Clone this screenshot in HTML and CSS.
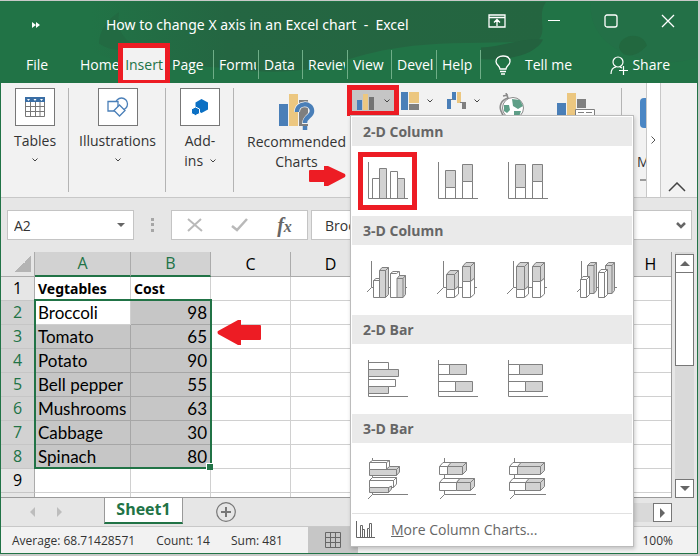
FILE: index.html
```
<!DOCTYPE html>
<html lang="en">
<head>
  <meta charset="UTF-8">
  <meta name="viewport" content="width=device-width, initial-scale=1.0">
  <title>How to change X axis in an Excel chart - Excel</title>
  <link rel="stylesheet" href="styles.css">
</head>
<body>
  <div class="window">
    <header class="top">
      <svg class="top-art" viewBox="0 0 696 82" preserveAspectRatio="none">
        <defs>
          <linearGradient id="shade">
            <stop offset="0" stop-color="#246642" stop-opacity="0"/>
            <stop offset=".3" stop-color="#246642"/>
            <stop offset="1" stop-color="#246540"/>
          </linearGradient>
        </defs>
        <path d="M90 0H545C535 14 548 30 536 40C490 42 440 40 400 46C340 54 330 74 250 70C190 60 130 70 90 50Z" fill="url(#shade)"/>
        <path d="M98 42C98 30 106 18 118 10C116 26 120 36 134 44C122 50 110 50 98 42Z" fill="#226a42"/>
        <path d="M480 46C500 46 520 36 542 38C536 52 510 60 480 58Z" fill="#23623f"/>
        <path d="M590 0H696V56C670 66 640 60 616 48C596 36 588 18 590 0Z" fill="#237047"/>
        <path d="M618 46C618 34 640 28 646 44C636 56 622 58 618 46Z" fill="#22683f"/>
      </svg>
      <div class="titlebar">
        <button class="qat" aria-label="Customize toolbar">
          <svg width="8" height="6" viewBox="0 0 8 6"><path d="M0 0L4 3L0 6ZM4 0L8 3L4 6Z" fill="#fff"/></svg>
        </button>
        <h1>How to change X axis in an Excel chart&nbsp; -&nbsp; Excel</h1>
        <div class="win-buttons">
          <button aria-label="Ribbon display options">
            <svg width="18" height="14" viewBox="0 0 18 14" fill="none" stroke="#fff"><path d="M1 1H17V13H1ZM1 3.500H17M9 12V6M6 8.500L9 5.500L12 8.500" stroke-width="1.300"/></svg>
          </button>
          <button aria-label="Minimize">
            <svg width="14" height="14" viewBox="0 0 14 14"><path d="M1 6.500H13" stroke="#fff"/></svg>
          </button>
          <button aria-label="Maximize">
            <svg width="14" height="14" viewBox="0 0 14 14" fill="none" stroke="#fff"><rect x="1" y="1" width="12" height="12" rx="2" stroke-width="1.300"/></svg>
          </button>
          <button aria-label="Close">
            <svg width="14" height="14" viewBox="0 0 14 14"><path d="M1 1L13 13M13 1L1 13" stroke="#fff" stroke-width="1.300"/></svg>
          </button>
        </div>
      </div>
      <nav class="tabs">
        <a href="#" class="file">File</a>
        <a href="#" class="home">Home</a>
        <a href="#" class="active">Insert</a>
        <a href="#" class="tab page"><span>Page</span></a>
        <a href="#" class="tab"><span>Formu</span></a>
        <a href="#" class="tab"><span>Data</span></a>
        <a href="#" class="tab"><span>Review</span></a>
        <a href="#" class="tab"><span>View</span></a>
        <a href="#" class="tab"><span>Devel</span></a>
        <a href="#" class="tab"><span>Help</span></a>
        <a href="#" class="tell">
          <svg width="16" height="20" viewBox="0 0 16 20" fill="none" stroke="#fff" stroke-width="1.300"><path d="M5 14C5 11 1 10 1 6.500C1 3 4 1 8 1S15 3 15 6.500C15 10 11 11 11 14ZM5 16.500H11M6 19H10"/></svg>
          Tell me
        </a>
        <a href="#" class="share">
          <svg width="18" height="19" viewBox="0 0 18 19" fill="none" stroke="#fff" stroke-width="1.200"><circle cx="8" cy="6" r="5"/><path d="M1 18C1 14 3 11.500 6 11M10 11L12 12M9 14.500H18M13.500 10V19"/></svg>
          Share
        </a>
      </nav>
    </header>

    <section class="ribbon">
      <button class="group tables">
        <span class="icon-box">
          <svg width="20" height="20" viewBox="0 0 20 20"><path d="M.5 .5H19.500V19.500H.5ZM.5 9.500H19.500M.5 14.500H19.500M5.500 4V19.500M10.500 4V19.500M15 4V19.500" fill="none" stroke="#777"/><path d="M0 0H20V5H0Z" fill="#3a6ea5"/><path d="M2 2H5L3.500 4ZM8.500 2H11.500L10 4ZM15 2H18L16.500 4Z" fill="#fff"/></svg>
        </span>
        <span>Tables</span>
        <svg class="chev" width="6" height="4" viewBox="0 0 6 4"><path d="M.5 .5L3 3L5.500 .5"/></svg>
      </button>
      <button class="group illustrations">
        <span class="icon-box">
          <svg width="22" height="20" viewBox="0 0 22 20" fill="#fff" stroke="#4a7fb8" stroke-width="1.300"><circle cx="14.500" cy="7" r="6"/><path d="M1 4.500H11V14H1Z"/><path d="M12.500 8L18 13.500L12.500 19L7 13.500Z"/></svg>
        </span>
        <span>Illustrations</span>
        <svg class="chev" width="6" height="4" viewBox="0 0 6 4"><path d="M.5 .5L3 3L5.500 .5"/></svg>
      </button>
      <button class="group addins">
        <span class="icon-box">
          <svg width="18" height="18" viewBox="0 0 18 18" fill="#0b70c4"><path d="M10.500 1L17 4.500V11.500L10.500 15L4.500 11.500V4.500Z"/><path d="M4.500 9L8.500 11V15.500L4.500 17.500L.5 15.500V11Z" stroke="#fff"/></svg>
        </span>
        <span>Add-</span>
        <span>ins <svg class="chev" width="6" height="4" viewBox="0 0 6 4"><path d="M.5 .5L3 3L5.500 .5"/></svg></span>
      </button>
      <div class="charts">
        <button class="recommended">
          <svg width="36" height="36" viewBox="0 0 36 36"><path d="M0 10H9V32H0Z" fill="#4a7fb8"/><path d="M10 0H19V32H10Z" fill="#ecc780"/><path d="M20 6H29V32H20Z" fill="#7f7f7f"/><path d="M18 18C18 8 33 8 33 17C33 23 26 22 26 30" fill="none" stroke="#f2f2f2" stroke-width="6"/><path d="M18 18C18 8 33 8 33 17C33 23 26 22 26 29M26 32V36" fill="none" stroke="#4a7fb8" stroke-width="4.500"/></svg>
          <span>Recommended</span>
          <span>Charts</span>
        </button>
        <div class="column-chart">
          <button class="column-button" aria-label="Insert column chart">
            <svg width="18" height="18" viewBox="0 0 18 18"><path d="M0 8H5V18H0Z" fill="#4a7fb8"/><path d="M6 2H11V18H6Z" fill="#ecc780"/><path d="M12 5H17V18H12Z" fill="#737373"/></svg>
            <svg class="chev" width="6" height="4" viewBox="0 0 6 4"><path d="M.5 .5L3 3L5.500 .5"/></svg>
          </button>
          <div class="menu">
            <h2>2-D Column</h2>
            <div class="options">
              <button class="picked" aria-label="Clustered column"><svg class="chart" viewBox="0 0 40 40"><path d="M4.500 17.500H11.500V37.500H4.500ZM22.500 10.500H29.500V37.500H22.500Z" fill="#fff"/><path d="M11.500 7.500H18.500V37.500H11.500ZM29.500 17.500H36.500V37.500H29.500Z" fill="#d2d2d2"/><path d="M.5 1V37.500H40"/></svg></button>
              <button aria-label="Stacked column"><svg class="chart" viewBox="0 0 40 40"><path d="M7.500 26.500H17.500V37.500H7.500ZM24.500 20.500H34.500V37.500H24.500Z" fill="#fff"/><path d="M7.500 9.500H17.500V26.500H7.500ZM24.500 3.500H34.500V20.500H24.500Z" fill="#d2d2d2"/><path d="M.5 1V37.500H40"/></svg></button>
              <button aria-label="100% stacked column"><svg class="chart" viewBox="0 0 40 40"><path d="M7.500 26.500H17.500V37.500H7.500ZM24.500 20.500H34.500V37.500H24.500Z" fill="#fff"/><path d="M7.500 3.500H17.500V26.500H7.500ZM24.500 3.500H34.500V20.500H24.500Z" fill="#d2d2d2"/><path d="M.5 1V37.500H40"/></svg></button>
            </div>
            <h2>3-D Column</h2>
            <div class="options">
              <button aria-label="3-D clustered column"><svg class="chart" viewBox="0 0 40 40"><path d="M4.500 1V27.500L0 32M4.500 27.500H40" fill="none"/><path d="M6.500 20.500L9 18.500H15V37.500H6.500ZM6.500 20.500H12.500M23.500 13.500L26 11.500H32.500V37.500H23.500ZM23.500 13.500H29.500L32 11.500" fill="#fff"/><path d="M12.500 10.500L15 7.500H21.500V34.500L18.500 37.500H12.500ZM12.500 10.500H18.500V37.500M18.500 10.500L21.500 7.500M30 18.500L32.500 15.500H38.500V34.500L36 37.500H30ZM30 18.500H36V37.500M36 18.500L38.500 15.500" fill="#d2d2d2"/></svg></button>
              <button aria-label="3-D stacked column"><svg class="chart" viewBox="0 0 40 40"><path d="M6.500 1V27.500L0 34M6.500 27.500H40" fill="none"/><path d="M9.500 29.500H17.500L21.500 26V34L17.500 37.500H9.500ZM17.500 29.500V37.500M25.500 21.500H33.500L37.500 18V34L33.500 37.500H25.500ZM33.500 21.500V37.500" fill="#fff"/><path d="M9.500 14.500L13 10.500H21.500V26L17.500 29.500H9.500ZM9.500 14.500H17.500V29.500M17.500 14.500L21.500 10.500M25.500 6.500L29 2.500H37.500V18L33.500 21.500H25.500ZM25.500 6.500H33.500V21.500M33.500 6.500L37.500 2.500" fill="#d2d2d2"/></svg></button>
              <button aria-label="3-D 100% stacked column"><svg class="chart" viewBox="0 0 40 40"><path d="M6.500 1V27.500L0 34M6.500 27.500H40" fill="none"/><path d="M9.500 29.500H17.500L21.500 26V34L17.500 37.500H9.500ZM17.500 29.500V37.500M25.500 21.500H33.500L37.500 18V34L33.500 37.500H25.500ZM33.500 21.500V37.500" fill="#fff"/><path d="M9.500 6.500L13 2.500H21.500V26L17.500 29.500H9.500ZM9.500 6.500H17.500V29.500M17.500 6.500L21.500 2.500M25.500 6.500L29 2.500H37.500V18L33.500 21.500H25.500ZM25.500 6.500H33.500V21.500M33.500 6.500L37.500 2.500" fill="#d2d2d2"/></svg></button>
              <button aria-label="3-D column"><svg class="chart" viewBox="0 0 40 40"><path d="M4.500 1V27.500L0 32M4.500 27.500H40" fill="none"/><path d="M10.500 5.500L13.500 2.500H19.500V30.500L17 33.500H10.500ZM10.500 5.500H17V33.500M17 5.500L19.500 2.500M28.500 5.500L31.500 2.500H37.500V30.500L35 33.500H28.500ZM28.500 5.500H35V33.500M35 5.500L37.500 2.500" fill="#d2d2d2"/><path d="M3.500 19.500L6 16.500H12.500V34.500L9.500 37.500H3.500ZM3.500 19.500H9.500V37.500M9.500 19.500L12.500 16.500M21.500 12.500L24 9.500H30.500V34.500L27.500 37.500H21.500ZM21.500 12.500H27.500V37.500M27.500 12.500L30.500 9.500" fill="#fff"/></svg></button>
            </div>
            <h2>2-D Bar</h2>
            <div class="options">
              <button aria-label="Clustered bar"><svg class="chart" viewBox="0 0 40 40"><path d="M.5 3.500H20.500V10.500H.5ZM.5 20.500H27.500V27.500H.5Z" fill="#fff"/><path d="M.5 10.500H30.500V17.500H.5ZM.5 27.500H20.500V34.500H.5Z" fill="#d2d2d2"/><path d="M.5 1V37.500H40" fill="none"/></svg></button>
              <button aria-label="Stacked bar"><svg class="chart" viewBox="0 0 40 40"><path d="M.5 5.500H11.500V15.500H.5ZM.5 22.500H17.500V32.500H.5Z" fill="#fff"/><path d="M11.500 5.500H28.500V15.500H11.500ZM17.500 22.500H34.500V32.500H17.500Z" fill="#d2d2d2"/><path d="M.5 1V37.500H40" fill="none"/></svg></button>
              <button aria-label="100% stacked bar"><svg class="chart" viewBox="0 0 40 40"><path d="M.5 5.500H11.500V15.500H.5ZM.5 22.500H17.500V32.500H.5Z" fill="#fff"/><path d="M11.500 5.500H34.500V15.500H11.500ZM17.500 22.500H34.500V32.500H17.500Z" fill="#d2d2d2"/><path d="M.5 1V37.500H40" fill="none"/></svg></button>
            </div>
            <h2>3-D Bar</h2>
            <div class="options">
              <button aria-label="3-D clustered bar"><svg class="chart" viewBox="0 0 40 40"><path d="M4.500 0V36.500L0 41M4.500 36.500H40" fill="none"/><path d="M1.500 4.500L4.500 2.500H21.500V8.500L18.500 11.500H1.500ZM1.500 4.500H18.500V11.500M18.500 4.500L21.500 2.500M1.500 22.500L4.500 19.500H28.500V26L25.500 29.500H1.500ZM1.500 22.500H25.500V29.500M25.500 22.500L28.500 19.500" fill="#fff"/><path d="M1.500 11.500H18L21.500 8.500H31.500V14L28.500 17.500H1.500ZM18 11.500H28.500V17.500M28.500 11.500L31.500 8.500M1.500 29.500H20.500V34.500H1.500ZM20.500 29.500L23.500 28V31L20.500 34.500Z" fill="#d2d2d2"/></svg></button>
              <button aria-label="3-D stacked bar"><svg class="chart" viewBox="0 0 40 40"><path d="M6.500 0V36.500L2 41M6.500 36.500H38" fill="none"/><path d="M1.500 8.500L5 4.500H14L10.500 8.500V16.500H1.500ZM1.500 8.500H10.500M1.500 24.500L5 20.500H22L18.500 24.500V32.500H1.500ZM1.500 24.500H18.500" fill="#fff"/><path d="M9.500 8.500L13 4.500H28.500V12.500L24.500 16.500H9.500ZM9.500 8.500H24.500V16.500M24.500 8.500L28.500 4.500M18.500 24.500L22 20.500H36.500V28.500L32.500 32.500H18.500ZM18.500 24.500H32.500V32.500M32.500 24.500L36.500 20.500" fill="#d2d2d2"/></svg></button>
              <button aria-label="3-D 100% stacked bar"><svg class="chart" viewBox="0 0 40 40"><path d="M6.500 0V36.500L2 41M6.500 36.500H38" fill="none"/><path d="M1.500 8.500L5 4.500H14L10.500 8.500V16.500H1.500ZM1.500 8.500H10.500M1.500 24.500L5 20.500H22L18.500 24.500V32.500H1.500ZM1.500 24.500H18.500" fill="#fff"/><path d="M9.500 8.500L13 4.500H36.500V12.500L32.500 16.500H9.500ZM9.500 8.500H32.500V16.500M32.500 8.500L36.500 4.500M17.500 24.500L21 20.500H36.500V28.500L32.500 32.500H17.500ZM17.500 24.500H32.500V32.500M32.500 24.500L36.500 20.500" fill="#d2d2d2"/></svg></button>
            </div>
            <button class="more">
              <svg width="19" height="18" viewBox="0 0 19 18" fill="none" stroke="#666"><path d="M.5 0V16.500H19M4.500 16V4.500H6.500V16M6.500 8.500H8.500V16M11.500 16V7.500H13.500V16M13.500 7V2.500H15.500V16"/></svg>
              <span><u>M</u>ore Column Charts...</span>
            </button>
          </div>
        </div>
        <button class="chart-button" aria-label="Hierarchy chart">
          <svg width="18" height="18" viewBox="0 0 18 18"><path d="M0 0H7V18H0Z" fill="#4a7fb8"/><path d="M8 0H18V11H8Z" fill="#ecc780"/><path d="M8 12H18V18H8Z" fill="#7f7f7f"/></svg>
          <svg class="chev" width="6" height="4" viewBox="0 0 6 4"><path d="M.5 .5L3 3L5.500 .5"/></svg>
        </button>
        <button class="chart-button" aria-label="Waterfall chart">
          <svg width="19" height="18" viewBox="0 0 19 18"><path d="M0 7H4V17H0ZM5 0H9V8H5Z" fill="#4a7fb8"/><path d="M10 0H14V11H10Z" fill="#ecc780"/><path d="M15 10H19V17H15Z" fill="#7f7f7f"/><path d="M4 7.500H6M13 10.500H16" stroke="#7f7f7f"/></svg>
          <svg class="chev" width="6" height="4" viewBox="0 0 6 4"><path d="M.5 .5L3 3L5.500 .5"/></svg>
        </button>
        <button class="big-button" aria-label="Maps">
          <svg width="26" height="32" viewBox="0 0 26 32"><circle cx="14" cy="15" r="10.500" fill="#fff" stroke="#8a8a8a"/><path d="M13 6L21 7L24 13L19 16L14 13ZM5 12L10 12L11 17L8 20L5 18ZM15 18L22 18L20 24L15 25Z" fill="#5f9f88"/><path d="M4 3L9 2M7 0L9 5C2 7 0 13 2 18C4 24 8 27 13 29" fill="none" stroke="#8a8a8a" stroke-width="1.600"/></svg>
        </button>
        <button class="big-button" aria-label="PivotChart">
          <svg width="38" height="32" viewBox="0 0 38 32"><path d="M0 10H9V32H0Z" fill="#4a7fb8"/><path d="M10 0H19V32H10Z" fill="#ecc780"/><path d="M20 6H29V15H20Z" fill="#7f7f7f"/><path d="M18.500 16.500H37.500V32H18.500ZM21 19.500H27M29 19.500H35" fill="#fff" stroke="#7f7f7f"/></svg>
        </button>
      </div>
      <button class="maps">
        <svg width="36" height="30" viewBox="0 0 36 30"><rect width="36" height="30" rx="4" fill="#4a86c4"/></svg>
        <span>Maps</span>
        <svg class="chev" width="6" height="4" viewBox="0 0 6 4"><path d="M0 1H6"/></svg>
      </button>
      <button class="scroll-right" aria-label="Scroll ribbon"><svg width="5" height="8" viewBox="0 0 5 8"><path d="M.5 .5L4 4L.5 7.500" fill="none" stroke="#555"/></svg></button>
      <button class="collapse" aria-label="Collapse ribbon"><svg width="18" height="10" viewBox="0 0 18 10"><path d="M1 9L9 1L17 9" fill="none" stroke="#444" stroke-width="1.500"/></svg></button>
      <svg class="arrow arrow-right" width="38" height="22" viewBox="0 0 38 22"><path d="M1 6Q1 5 2 5H16V1H20L37 9Q38 11 37 12L20 21H16V17H2Q1 17 1 16Z" fill="#ed1c24"/></svg>
    </section>

    <section class="formula-bar">
      <div class="name-box">
        <input type="text" value="A2" aria-label="Name box">
        <svg width="8" height="4" viewBox="0 0 8 4"><path d="M0 0H8L4 4Z" fill="#666"/></svg>
      </div>
      <svg class="dots" width="3" height="14" viewBox="0 0 3 14"><path d="M0 0H3V3H0ZM0 5H3V8H0ZM0 11H3V14H0Z" fill="#a6a6a6"/></svg>
      <div class="fx-box">
        <button aria-label="Cancel"><svg width="16" height="14" viewBox="0 0 16 14"><path d="M1 1L15 13M14 1L1 13" stroke="#b9b9b9" stroke-width="2"/></svg></button>
        <button aria-label="Enter"><svg width="17" height="14" viewBox="0 0 17 14"><path d="M1 8L6 12L16 1" fill="none" stroke="#b9b9b9" stroke-width="2.500"/></svg></button>
        <button class="fx" aria-label="Insert function">f<small>x</small></button>
      </div>
      <div class="formula">
        <input type="text" value="Broccoli" aria-label="Formula">
        <svg width="10" height="7" viewBox="0 0 10 7"><path d="M1 1L5 5L9 1" fill="none" stroke="#666" stroke-width="2.500"/></svg>
      </div>
    </section>

    <main class="sheet">
      <div class="grid">
        <table id="cells">
          <colgroup><col class="col-num"><col class="col-a"></colgroup>
        </table>
        <div class="selection"></div>
        <svg class="arrow arrow-left" width="45" height="27" viewBox="0 0 45 27"><path d="M1 12L21 1H24V6H43Q44 6 44 7V20Q44 21 43 21H24V26H21L1 15Q0 13 1 12Z" fill="#ed1c24"/></svg>
      </div>
      <div class="scroll-v">
        <button aria-label="Scroll up"><svg width="10" height="5" viewBox="0 0 10 5"><path d="M0 5L5 0L10 5Z" fill="#666"/></svg></button>
        <div class="thumb"></div>
        <button class="down" aria-label="Scroll down"><svg width="10" height="5" viewBox="0 0 10 5"><path d="M0 0H10L5 5Z" fill="#666"/></svg></button>
      </div>
    </main>

    <div class="sheet-bar">
      <button aria-label="Previous sheet"><svg width="5" height="10" viewBox="0 0 5 10"><path d="M5 0V10L0 5Z" fill="#bdbdbd"/></svg></button>
      <button aria-label="Next sheet"><svg width="5" height="10" viewBox="0 0 5 10"><path d="M0 0V10L5 5Z" fill="#bdbdbd"/></svg></button>
      <a href="#" class="sheet-tab">Sheet1</a>
      <button class="add" aria-label="New sheet"><svg width="20" height="20" viewBox="0 0 20 20" fill="none" stroke="#777"><circle cx="10" cy="10" r="9.300" stroke-width="1.200"/><path d="M10 5V15M5 10H15" stroke-width="2"/></svg></button>
      <div class="scroll-h">
        <button aria-label="Scroll right"><svg width="5" height="10" viewBox="0 0 5 10"><path d="M0 0V10L5 5Z" fill="#666"/></svg></button>
      </div>
    </div>

    <footer class="status">
      <span>Average: 68.71428571</span>
      <span>Count: 14</span>
      <span>Sum: 481</span>
      <button class="view" aria-label="Normal view"><svg width="16" height="16" viewBox="0 0 16 16"><path d="M.5 .5H15.500V15.500H.5ZM.5 5.500H15.500M.5 10.500H15.500M5.500 .5V15.500M10.500 .5V15.500" fill="none" stroke="#666"/></svg></button>
      <span class="zoom">100%</span>
    </footer>
  </div>

  <script>
    const COLUMNS = ['A', 'B', 'C', 'D', 'E', 'F', 'G', 'H', 'I', 'J', 'K', 'L'];
    const ROWS = [
      ['Vegtables', 'Cost'],
      ['Broccoli', 98],
      ['Tomato', 65],
      ['Potato', 90],
      ['Bell pepper', 55],
      ['Mushrooms', 63],
      ['Cabbage', 30],
      ['Spinach', 80],
      [],
      [],
    ];

    const isPicked = (row, col) => row > 0 && row < 8 && col < 2;

    const table = document.getElementById('cells');
    const head = COLUMNS.map((c, i) => `<th class="${i < 2 ? 'on' : ''}">${c}</th>`).join('');
    let html = `<thead><tr><th class="corner"></th>${head}</tr></thead><tbody>`;
    ROWS.forEach((row, r) => {
      const cells = COLUMNS.map((c, i) => {
        const value = row[i] === undefined ? '' : row[i];
        let cls = r === 0 ? 'bold' : '';
        if (isPicked(r, i)) cls = r === 1 && i === 0 ? 'current' : 'picked-cell';
        if (typeof value === 'number') cls += ' num';
        return `<td class="${cls}">${value}</td>`;
      }).join('');
      html += `<tr><th class="${r > 0 && r < 8 ? 'on' : ''}">${r + 1}</th>${cells}</tr>`;
    });
    table.insertAdjacentHTML('beforeend', html + '</tbody>');
  </script>
</body>
</html>
```
FILE: styles.css
```
* {
  margin: 0;
  padding: 0;
  box-sizing: border-box;
}
body {
  background: #c9c9c9;
  color: #333;
  font-family: 'Open Sans', 'Noto Sans', sans-serif;
  font-size: 14px;
  height: 100vh;
  min-height: 400px;
  padding: 1px 2px 2px 0;
  overflow: hidden;
}
button, input {
  font: inherit;
  color: inherit;
  background: none;
  border: none;
}
button {
  display: flex;
  align-items: center;
  justify-content: center;
  cursor: pointer;
}
a {
  color: inherit;
  text-decoration: none;
}
svg {
  display: block;
  flex-shrink: 0;
}
.window {
  display: flex;
  flex-direction: column;
  height: 100%;
  border: 1px solid #217346;
  background: #e6e6e6;
}

/* title bar and tabs */
.top {
  position: relative;
  background: #217346;
  color: #fff;
}
.top-art {
  position: absolute;
  width: 100%;
  height: 100%;
}
.titlebar, .tabs {
  position: relative;
  display: flex;
}
.titlebar {
  height: 45px;
  align-items: center;
}
.qat {
  width: 70px;
}
.titlebar h1 {
  flex: 1;
  padding-left: 35px;
  font: 14px 'Noto Sans', sans-serif;
  white-space: nowrap;
}
.win-buttons {
  display: flex;
  padding: 0 1px 7px 0;
}
.win-buttons button {
  width: 57px;
}
.tabs {
  height: 36px;
  line-height: 36px;
  white-space: nowrap;
}
.tabs .file {
  width: 79px;
  padding-left: 25px;
}
.tabs .home {
  width: 38px;
  overflow: hidden;
}
.tabs .active {
  width: 52px;
  height: 42px;
  margin: -4px 0 -2px;
  line-height: 34px;
  border: 5px solid #ed1c24;
  background: #f2f2f2;
  color: #217346;
  text-align: center;
}
.tabs .tab {
  position: relative;
  width: 44px;
  padding: 0 3px 0 5px;
}
.tabs .tab:nth-child(odd) {
  width: 45px;
}
.tabs .page {
  padding-left: 2px;
}
.tab span {
  display: block;
  overflow: hidden;
}
.tab::after {
  content: '';
  position: absolute;
  right: 0;
  top: 3px;
  height: 29px;
  border-right: 1px solid #6fae88;
}
.tabs .tell, .tabs .share {
  display: flex;
  align-items: center;
  gap: 14px;
  padding-left: 14px;
}
.tabs .share {
  gap: 4px;
  margin-left: auto;
  padding-right: 27px;
}

/* ribbon */
.ribbon {
  position: relative;
  display: flex;
  height: 115px;
  background: #f2f2f2;
  border-bottom: 1px solid #c8c8c8;
}
.chev {
  fill: none;
  stroke: #444;
}
.group {
  position: relative;
  flex-direction: column;
  justify-content: flex-start;
  padding-top: 5px;
  line-height: 20px;
}
.group::after {
  content: '';
  position: absolute;
  right: 0;
  top: 5px;
  height: 104px;
  border-right: 1px solid #b4b4b4;
}
.tables, .addins {
  width: 68px;
}
.illustrations {
  width: 97px;
}
.icon-box {
  display: flex;
  align-items: center;
  justify-content: center;
  width: 40px;
  height: 38px;
  margin-bottom: 5px;
  border: 1px solid #777;
  background: #fff;
}
.group > .chev {
  margin-top: 7px;
}
.group span .chev {
  display: inline-block;
  margin: 0 0 3px 3px;
}
.charts {
  position: relative;
  display: flex;
  align-items: flex-start;
  flex: 1;
  padding: 2px 0 0 12px;
}
.charts::after {
  content: '';
  position: absolute;
  right: 0;
  top: 5px;
  height: 104px;
  border-right: 1px solid #b4b4b4;
}
.recommended {
  flex-direction: column;
  width: 101px;
  padding-top: 9px;
  line-height: 20px;
}
.recommended svg {
  margin-bottom: 2px;
}
.column-chart {
  position: relative;
}
.column-button {
  gap: 9px;
  width: 52px;
  height: 31px;
  border: 5px solid #ed1c24;
  background: #c5c5c5;
}
.chart-button {
  justify-content: flex-start;
  gap: 8px;
  width: 46px;
  height: 31px;
  padding-left: 2px;
}
.big-button {
  padding: 8px 0 0 8px;
}
.big-button + .big-button {
  padding-left: 32px;
}
.maps {
  flex-direction: column;
  align-items: flex-start;
  justify-content: flex-start;
  width: 24px;
  padding: 15px 0 0 18px;
  overflow: hidden;
}
.maps span {
  margin: 24px 0 8px -3px;
}
.scroll-right {
  width: 15px;
  border: 1px solid #c8c8c8;
  border-width: 0 1px;
  background: #fff;
}
.collapse {
  width: 36px;
  padding: 93px 4px 0 0;
}
.arrow {
  position: absolute;
}
.arrow-right {
  left: 307px;
  top: 82px;
}

/* chart menu */
.menu {
  position: absolute;
  left: 3px;
  top: 30px;
  z-index: 5;
  width: 284px;
  padding: 1px;
  border: 1px solid #bcbcbc;
  background: #fff;
  box-shadow: 1px 2px 4px rgba(0, 0, 0, 0.2);
  color: #666;
}
.menu h2 {
  height: 29px;
  padding-left: 11px;
  background: #eaeaea;
  font-size: 14px;
  line-height: 29px;
}
.options {
  display: flex;
  gap: 11px;
  height: 70px;
  padding: 6px;
}
.options button {
  width: 59px;
  height: 58px;
}
.options .picked {
  border: 5px solid #ed1c24;
}
.chart {
  width: 40px;
  height: 40px;
  overflow: visible;
  fill: none;
  stroke: #808080;
}
.more {
  gap: 16px;
  width: 100%;
  height: 32px;
  padding-left: 4px;
  justify-content: flex-start;
  border-top: 1px solid #e1e1e1;
}

/* formula bar */
.formula-bar {
  display: flex;
  align-items: center;
  height: 54px;
  padding: 0 5px 0 6px;
}
.name-box, .fx-box, .formula {
  display: flex;
  align-items: center;
  height: 30px;
  border: 1px solid #c4c4c4;
  background: #fff;
}
.name-box {
  width: 127px;
  padding: 0 8px 0 6px;
}
.name-box input, .formula input {
  flex: 1;
  min-width: 0;
}
.dots {
  margin: 0 17px;
}
.fx-box {
  width: 137px;
  margin-right: 3px;
}
.fx-box button {
  flex: 1;
}
.fx-box .fx {
  align-items: baseline;
  color: #666;
  font: italic bold 20px 'Liberation Serif', serif;
}
.fx small {
  font-size: 16px;
}
.formula {
  flex: 1;
  padding: 0 5px 0 13px;
}

/* cells */
.sheet {
  display: flex;
  flex: 1;
  min-height: 0;
}
.grid {
  position: relative;
  flex: 1;
  overflow: hidden;
  border: 1px solid #999;
  border-width: 0 1px 1px 0;
}
table {
  width: 1010px;
  table-layout: fixed;
  border-collapse: separate;
  border-spacing: 0;
  color: #000;
  line-height: 23px;
}
.col-num {
  width: 34px;
}
.col-a {
  width: 96px;
}
th, td {
  height: 24px;
  border: 1px solid #d0d0d0;
  border-width: 0 1px 1px 0;
  background: #fff;
  white-space: nowrap;
}
th {
  background: #e6e6e6;
  border-color: #ababab;
  font-size: 16px;
  font-weight: normal;
}
tbody th {
  border-bottom-color: #c6c6c6;
}
td {
  padding: 0 3px;
  font-family: Lato, sans-serif;
  font-size: 17px;
}
.on {
  background: #d2d2d2;
  color: #217346;
}
thead .on {
  border-bottom: 2px solid #217346;
}
.corner {
  background: linear-gradient(135deg, transparent 50%, #b4b4b4 50%) 14px 4px / 16px 16px no-repeat #e6e6e6;
}
.bold {
  font-family: 'Noto Sans', sans-serif;
  font-size: 14px;
  font-weight: bold;
}
.num {
  text-align: right;
}
.picked-cell {
  background: #c6c6c6;
  border-color: #a6a6a6;
}
.selection {
  position: absolute;
  left: 33px;
  top: 47px;
  width: 178px;
  height: 170px;
  border: 2px solid #217346;
}
.selection::after {
  content: '';
  position: absolute;
  right: -3px;
  bottom: -3px;
  width: 6px;
  height: 6px;
  border: 1px solid #fff;
  border-width: 1px 0 0 1px;
  background: #217346;
}
.arrow-left {
  left: 216px;
  top: 67px;
}
.scroll-v {
  display: flex;
  flex-direction: column;
  width: 25px;
  padding: 2px 3px 0;
  background: linear-gradient(#d9d9d9, #d9d9d9) 3px 0 / 19px 100% no-repeat;
}
.scroll-v button, .scroll-h button {
  width: 19px;
  height: 19px;
  border: 1px solid #777;
  background: #fff;
}
.thumb {
  height: 94px;
  margin-top: -1px;
  border: 1px solid #777;
  background: #fff;
}
.scroll-v .down {
  margin-top: auto;
}

/* sheet tabs and status bar */
.sheet-bar {
  display: flex;
  height: 29px;
  border-bottom: 1px solid #c8c8c8;
}
.sheet-bar > button {
  width: 28px;
  margin-left: -1px;
}
.sheet-bar > button:first-child {
  margin-left: 17px;
}
.sheet-tab {
  width: 79px;
  height: 26px;
  margin-left: 31px;
  border: 1px solid #999;
  border-width: 0 1px 2px;
  border-bottom-color: #217346;
  background: #fff;
  color: #217346;
  font-size: 16px;
  font-weight: bold;
  line-height: 23px;
  text-align: center;
}
.sheet-bar .add {
  width: 20px;
  margin-left: 33px;
}
.scroll-h {
  display: flex;
  align-items: center;
  justify-content: flex-end;
  flex: 1;
  height: 19px;
  margin: 5px 25px 0 170px;
  background: #d9d9d9;
}
.status {
  display: flex;
  align-items: center;
  gap: 21px;
  height: 26px;
  padding: 0 24px 0 11px;
  background: #f2f2f2;
  font-size: 12px;
}
.status .view {
  width: 50px;
  height: 100%;
  margin-left: 4px;
  background: #c6c6c6;
}
.zoom {
  margin-left: auto;
}
```
